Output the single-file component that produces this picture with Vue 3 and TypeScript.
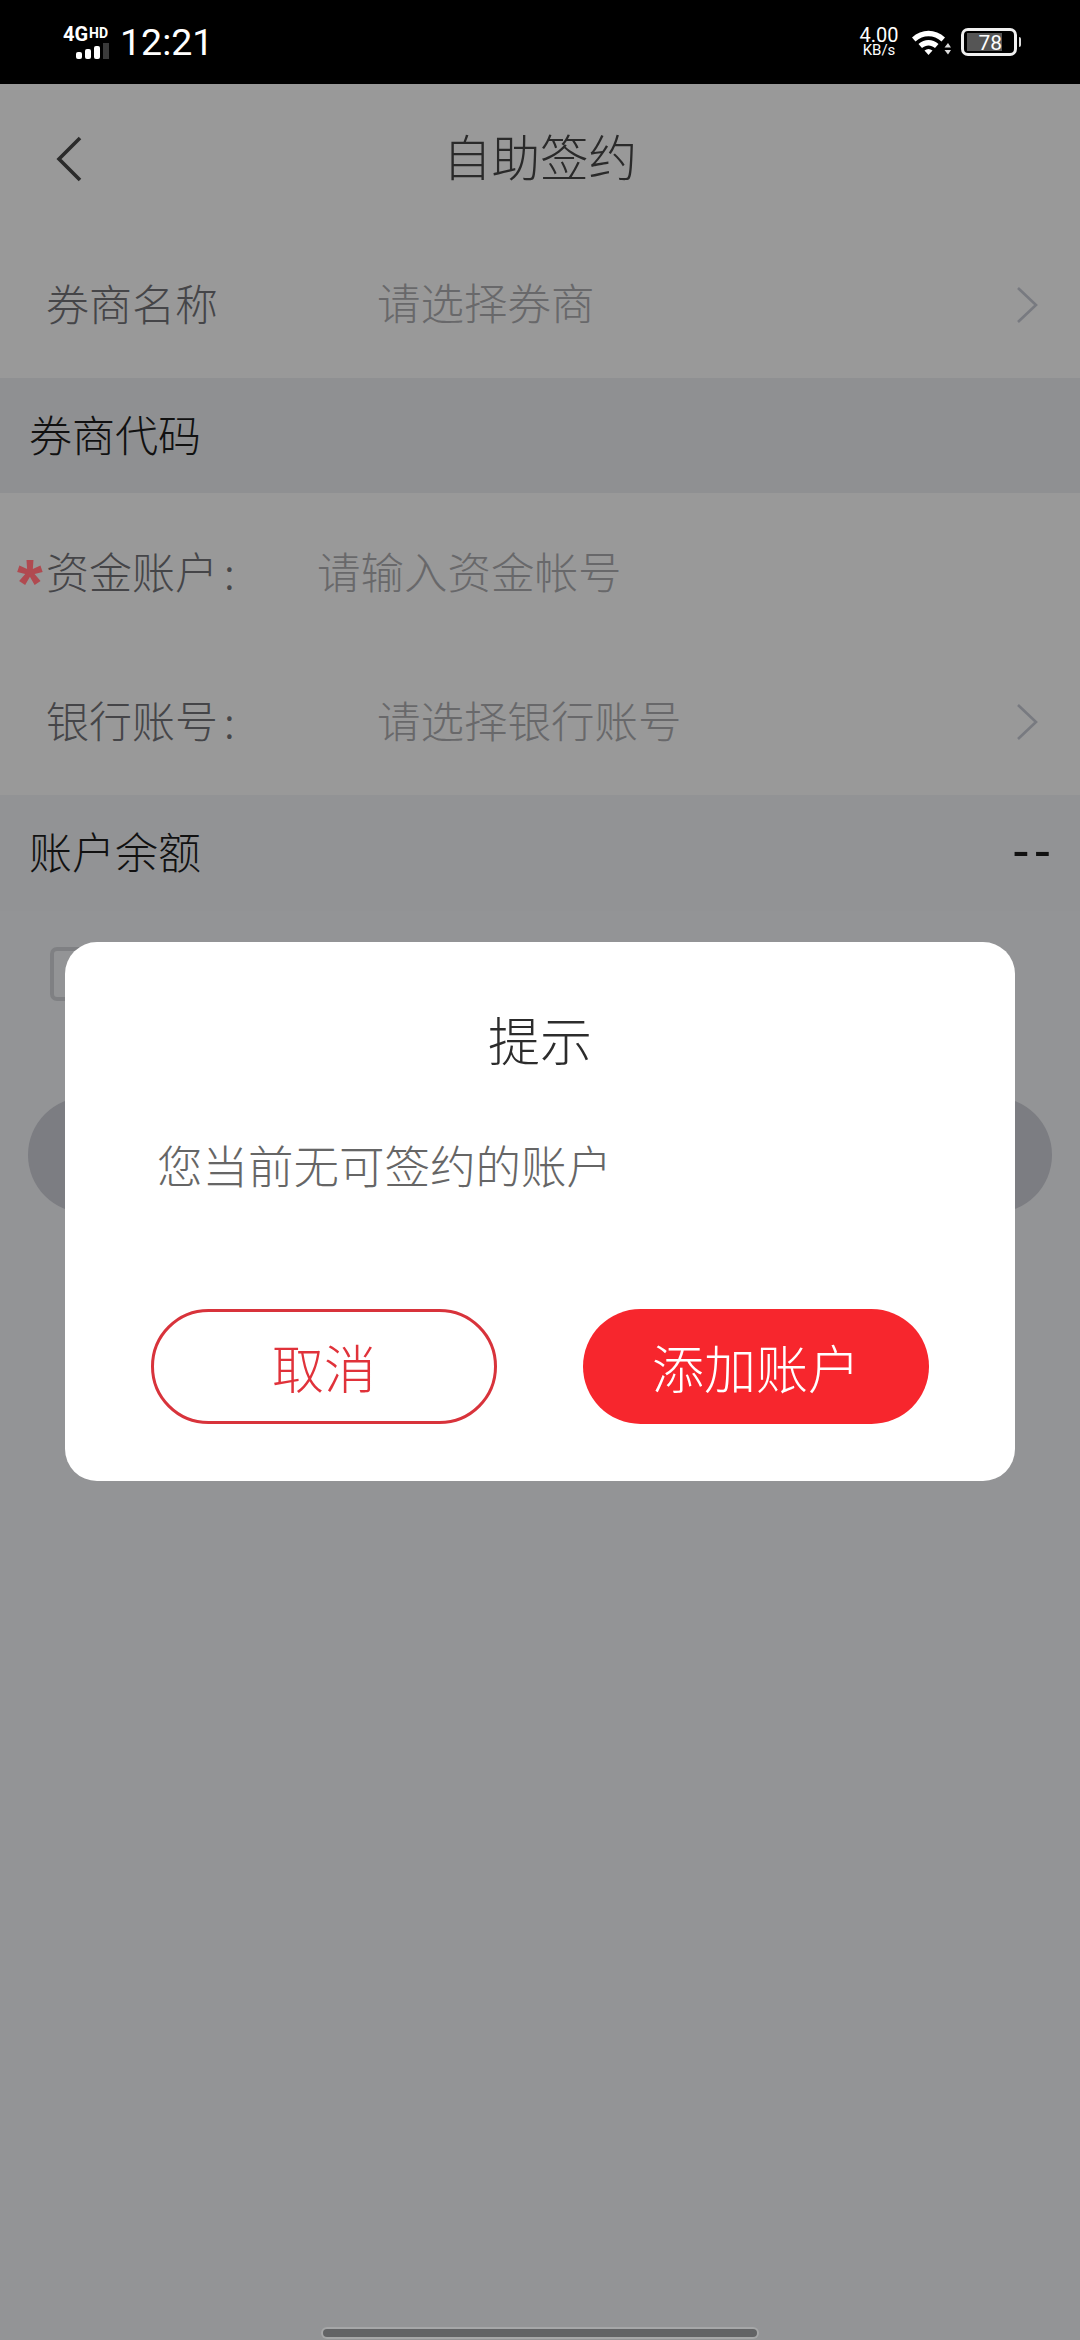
<template>
  <div class="screen">
    <header class="status">
      <div class="status__left">
        <div class="net">
          <div class="net__type">4G<span>HD</span></div>
          <div class="net__bars">
            <i v-for="h in barHeights" :key="h" :style="{ height: h + 'px' }"></i>
          </div>
        </div>
        <span class="status__time">12:21</span>
      </div>
      <div class="status__right">
        <div class="speed">
          <span>4.00</span>
          <small>KB/s</small>
        </div>
        <svg class="wifi" width="40" height="30" viewBox="0 0 40 30">
          <path d="M1 10.500C10.500 1.500 24.500 1.500 34 10.500L30.500 14.500C23 7.500 12 7.500 4.500 14.500Z" fill="#fff" />
          <path d="M7.500 17C13.500 11.500 21.500 11.500 27.500 17L24 21C20 17.500 15 17.500 11 21Z" fill="#fff" />
          <path d="M13.500 23.500C16 21.500 19 21.500 21.500 23.500L17.500 28Z" fill="#fff" />
          <path d="M33.500 20.500L37 16L40 20.500ZM33.500 23L40 23L37 27.500Z" fill="#ddd" />
        </svg>
        <div class="battery">
          <div class="battery__body">
            <div class="battery__fill">78</div>
          </div>
          <i class="battery__nub"></i>
        </div>
      </div>
    </header>

    <nav class="nav">
      <svg class="nav__back" width="26" height="46" viewBox="0 0 26 46">
        <path d="M24 2L3 23L24 44" fill="none" stroke="#2b2b2b" stroke-width="3.600" />
      </svg>
      <h1 class="nav__title">自助签约</h1>
    </nav>

    <section class="row row--first">
      <span class="row__label">券商名称</span>
      <span class="row__hint">请选择券商</span>
      <svg class="row__arrow" width="22" height="36" viewBox="0 0 22 36">
        <path d="M2 1L20 18L2 35" fill="none" stroke="#787a80" stroke-width="2.600" />
      </svg>
    </section>
    <section class="band band--code">
      <span>券商代码</span>
    </section>
    <section class="row row--account">
      <span class="row__star">*</span>
      <span class="row__label row__label--colon">资金账户<em>:</em></span>
      <span class="row__hint">请输入资金帐号</span>
    </section>
    <section class="row row--bank">
      <span class="row__label row__label--colon row__label--wide">银行账号<em>:</em></span>
      <span class="row__hint">请选择银行账号</span>
      <svg class="row__arrow row__arrow--low" width="22" height="36" viewBox="0 0 22 36">
        <path d="M2 1L20 18L2 35" fill="none" stroke="#787a80" stroke-width="2.600" />
      </svg>
    </section>
    <section class="band band--balance">
      <span>账户余额</span>
      <span class="band__value">--</span>
    </section>
    <div class="agree"><i class="agree__box"></i></div>
    <div class="submit"></div>

    <div class="dialog">
      <div class="dialog__title">提示</div>
      <div class="dialog__text">您当前无可签约的账户</div>
      <div class="dialog__actions">
        <button class="btn btn--ghost">取消</button>
        <button class="btn btn--solid">添加账户</button>
      </div>
    </div>

    <div class="home-bar"></div>
  </div>
</template>

<script setup lang="ts">
const barHeights: number[] = [7, 10, 13, 16]
</script>

<style>
html, body { margin: 0; background: #939496; }
</style>

<style scoped>
.screen {
  position: relative;
  width: 1080px;
  height: 2340px;
  overflow: hidden;
  background: #939496;
  font-family: "Noto Sans CJK SC", "Noto Sans", sans-serif;
  font-weight: 300;
}

.status {
  height: 84px;
  background: #000;
  color: #fff;
  display: flex;
  justify-content: space-between;
  align-items: center;
  padding: 0 59px 0 63px;
  box-sizing: border-box;
  font-family: Roboto, "Liberation Sans", sans-serif;
  font-weight: 400;
}
.status__left { display: flex; align-items: center; gap: 10px; }
.status__right { display: flex; align-items: center; }
.status__time { font-size: 37.500px; line-height: 40px; font-weight: 400; }
.net { width: 47px; }
.net__type {
  font-size: 20px;
  font-weight: 700;
  line-height: 17px;
  white-space: nowrap;
}
.net__type span { font-size: 14px; vertical-align: 3px; margin-left: 1px; }
.net__bars { display: flex; align-items: flex-end; gap: 3px; height: 16px; padding-left: 13px; }
.net__bars i { width: 6px; background: #fff; border-radius: 2px; }
.net__bars i:last-child { background: #3a3a3a; border-radius: 0; }
.speed {
  display: flex;
  flex-direction: column;
  align-items: center;
  width: 40px;
  margin-right: 12px;
}
.speed span { font-size: 20px; line-height: 16px; }
.speed small { font-size: 15px; line-height: 14px; }
.wifi { margin-right: 10px; }
.battery { display: flex; align-items: center; gap: 2px; }
.battery__body {
  width: 56px;
  height: 28px;
  box-sizing: border-box;
  border: 3px solid #f0f0f0;
  border-radius: 7px;
  padding: 2px 3px;
}
.battery__fill {
  width: 35px;
  height: 100%;
  background: #555;
  font-size: 21px;
  line-height: 20px;
  text-align: right;
  color: #fff;
}
.battery__nub { width: 2px; height: 10px; background: #ddd; border-radius: 0 2px 2px 0; }

.nav {
  height: 147px;
  background: #999;
  display: flex;
  align-items: center;
  justify-content: center;
  position: relative;
  box-sizing: border-box;
  padding-bottom: 6px;
}
.nav__back { position: absolute; left: 56px; top: 52px; }
.nav__title {
  margin: 0;
  font-size: 48.500px;
  font-weight: 300;
  color: #2a2a2a;
}

.row {
  display: flex;
  align-items: center;
  background: #999;
  padding-left: 46px;
  position: relative;
  box-sizing: border-box;
}
.row--first { height: 147px; padding-bottom: 6px; }
.row--account { height: 150px; padding-left: 0; padding-top: 4px; }
.row--bank { height: 152px; }
.row__label { font-size: 43px; color: #454548; width: 333px; flex: none; }
.row__label--colon { width: 273px; }
.row__label--colon em { font-style: normal; margin-left: 6px; }
.row__label--wide { width: 333px; }
.row__hint { font-size: 43.500px; color: #68686a; margin-left: -2px; }
.row__arrow { position: absolute; right: 42px; top: 50%; margin-top: -18px; }
.row__arrow--low { margin-top: -15px; }
.row__star {
  width: 46px;
  flex: none;
  font-family: "Liberation Sans", sans-serif;
  font-weight: 700;
  font-size: 66px;
  line-height: 40px;
  padding-left: 17px;
  box-sizing: border-box;
  color: #b04a50;
  margin-top: 26px;
}

.band {
  background: #8f9092;
  color: #111;
  font-size: 43px;
  display: flex;
  align-items: center;
  justify-content: space-between;
  padding: 0 29px 6px;
  box-sizing: border-box;
}
.band--code { height: 115px; }
.band--balance { height: 116px; background: #929395; }
.band__value {
  font-size: 52px;
  line-height: 52px;
  font-family: "Liberation Sans", sans-serif;
  letter-spacing: 4px;
  margin-right: -4px;
}

.agree { padding: 36px 0 0 50px; }
.agree__box {
  display: block;
  width: 54px;
  height: 54px;
  box-sizing: border-box;
  border: 4px solid #7f8083;
  border-radius: 7px;
}
.submit {
  margin: 96px 28px 0;
  height: 116px;
  border-radius: 58px;
  background: #7c7d82;
}

.dialog {
  position: absolute;
  left: 65px;
  top: 942px;
  width: 950px;
  height: 539px;
  box-sizing: border-box;
  background: #fff;
  border-radius: 32px;
  padding: 60px 86px 0 86px;
}
.dialog__title {
  font-size: 52px;
  line-height: 74px;
  text-align: center;
  color: #2c2c2c;
}
.dialog__text {
  margin-top: 56px;
  padding-left: 6px;
  font-size: 45.500px;
  line-height: 64px;
  color: #666;
}
.dialog__actions {
  margin-top: 113px;
  display: flex;
  justify-content: space-between;
}
.btn {
  width: 346px;
  height: 115px;
  border-radius: 58px;
  font-family: inherit;
  font-weight: 300;
  font-size: 52px;
  padding: 0;
  box-sizing: border-box;
}
.btn--ghost { background: #fff; border: 3px solid #d8333b; color: #e0323a; }
.btn--solid { background: #f7262d; border: none; color: #fff; }

.home-bar {
  position: absolute;
  left: 323px;
  top: 2329px;
  width: 434px;
  height: 8px;
  background: #626365;
  border-radius: 4px;
  box-shadow: 0 0 0 2px #a6a7a8;
}
</style>
